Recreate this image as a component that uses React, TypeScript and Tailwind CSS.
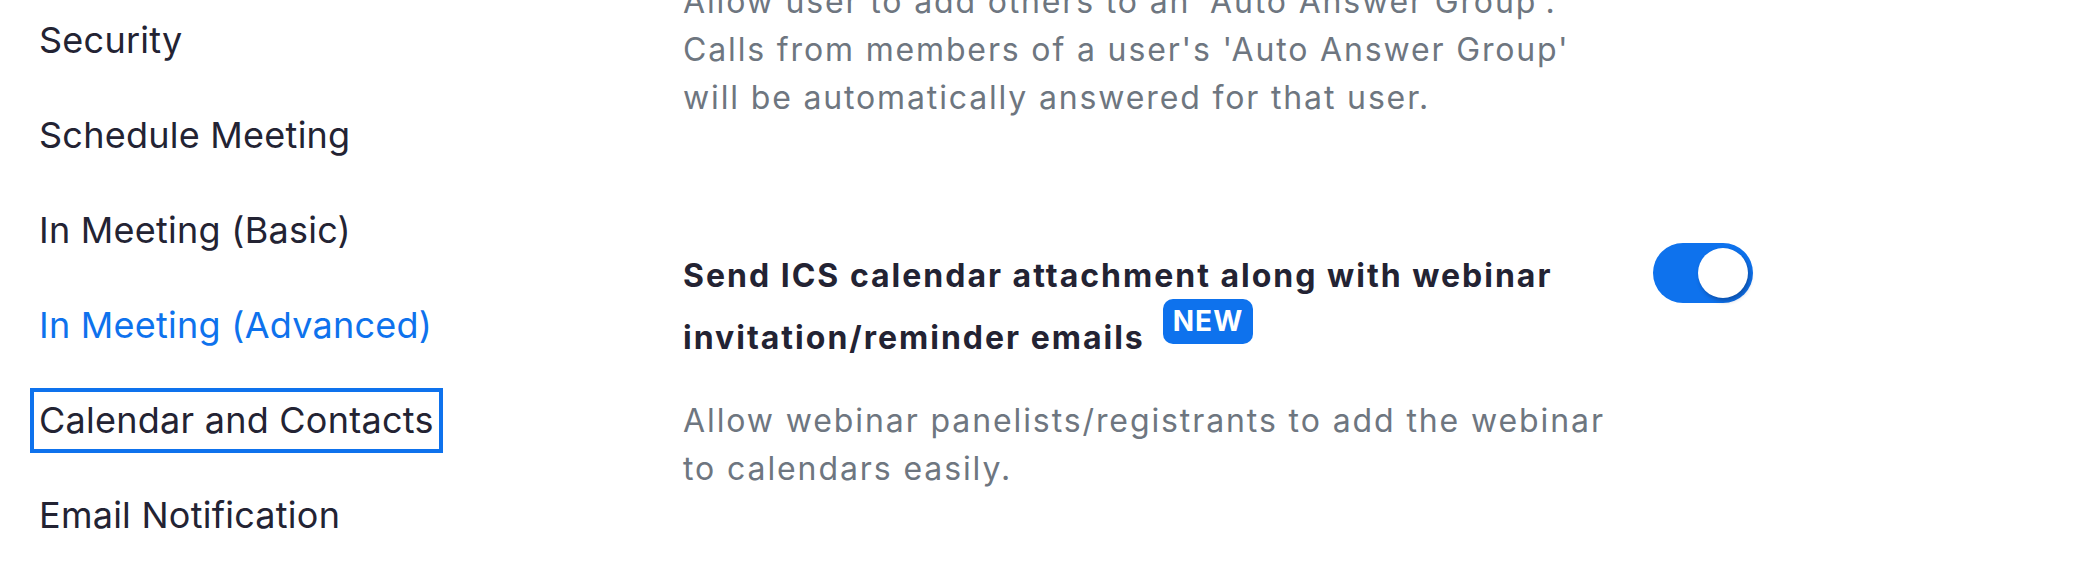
import React from "react";

const navItems = [
  { label: "Security" },
  { label: "Schedule Meeting" },
  { label: "In Meeting (Basic)" },
  { label: "In Meeting (Advanced)", active: true },
  { label: "Calendar and Contacts", focused: true },
  { label: "Email Notification" },
];

function Toggle({ on = true }: { on?: boolean }) {
  return (
    <button
      type="button"
      className={`relative h-[60px] w-[100px] shrink-0 rounded-full ${on ? "bg-[#0E72ED]" : "bg-[#BABACC]"}`}
    >
      <span
        className={`absolute top-[5px] h-[50px] w-[50px] rounded-full bg-white shadow-[2px_3px_4px_rgba(10,40,90,0.45)] ${
          on ? "right-[5px]" : "left-[5px]"
        }`}
      />
    </button>
  );
}

export default function App() {
  return (
    <div
      className="flex h-[570px] w-full overflow-hidden bg-white text-[#232333]"
      style={{ fontFamily: "Inter, 'Noto Sans', sans-serif" }}
    >
      <nav className="w-[683px] shrink-0 pl-[30px] pt-[8px]">
        <ul>
          {navItems.map((item) => (
            <li key={item.label} className="mb-[30px]">
              <a
                href="#"
                className={`inline-block border-4 px-[5px] text-[36px] leading-[57px] tracking-[0.25px] ${
                  item.focused ? "border-[#0E72ED]" : "border-transparent"
                } ${item.active ? "text-[#0E72ED]" : "text-[#232333]"}`}
              >
                {item.label}
              </a>
            </li>
          ))}
        </ul>
      </nav>

      <main className="flex-1">
        <p className="-mt-[22px] w-[930px] text-[32px] leading-[48px] tracking-[1.85px] text-[#6E7680]">
          Allow user to add others to an 'Auto Answer Group'.
          <br />
          Calls from members of a user's 'Auto Answer Group'
          <br />
          will be automatically answered for that user.
        </p>

        <div className="mt-[121px] flex items-start gap-[40px]">
          <div className="w-[930px]">
            <h3 className="mt-[2px] text-[32px] font-bold leading-[62px] tracking-[2px] text-[#232333]">
              Send ICS calendar attachment along with webinar
              <br />
              invitation/reminder emails
              <span className="relative -top-[18px] ml-[18px] inline-block h-[45px] rounded-[10px] bg-[#0E72ED] px-[10px] text-[28px] font-bold leading-[45px] tracking-[1px] text-white">
                NEW
              </span>
            </h3>
            <p className="mt-[28px] text-[32px] leading-[48px] tracking-[1.9px] text-[#6E7680]">
              Allow webinar panelists/registrants to add the webinar
              <br />
              to calendars easily.
            </p>
          </div>
          <Toggle />
        </div>
      </main>
    </div>
  );
}
